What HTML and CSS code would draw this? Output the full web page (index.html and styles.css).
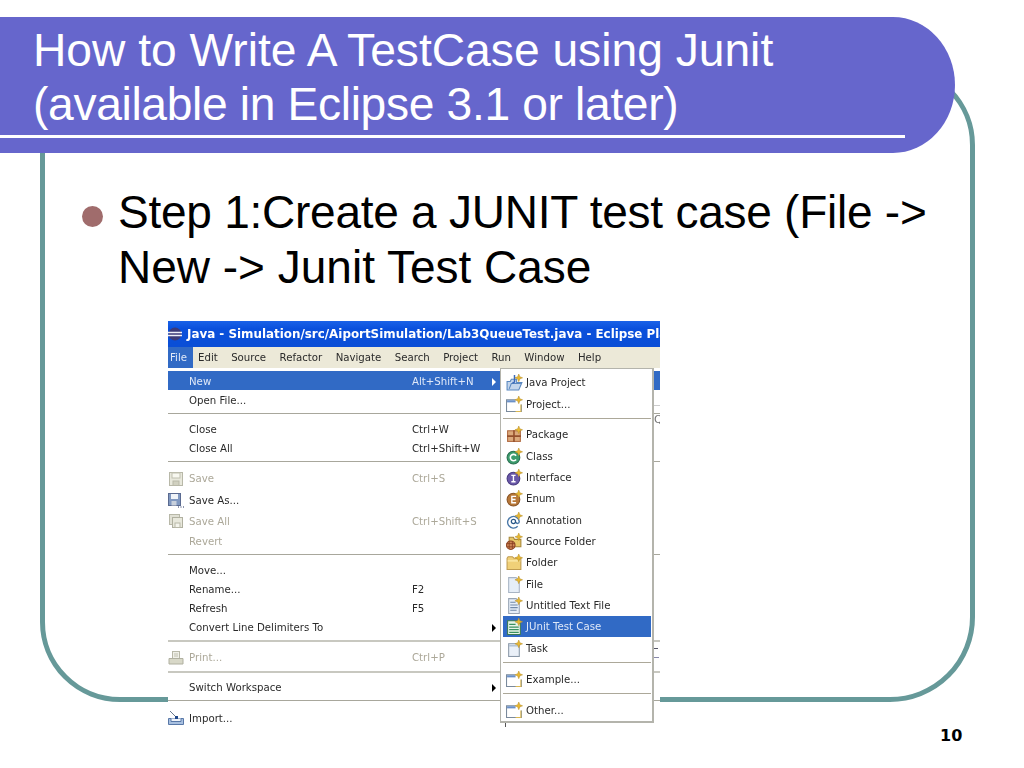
FILE: index.html
```html
<!DOCTYPE html>
<html>

<head>
    <meta charset="utf-8" />
    <title>How to Write A TestCase using Junit</title>
    <link rel="stylesheet" href="styles.css">
</head>

<body>
    <svg class="icon-defs" width="0" height="0">
        <defs>
            <symbol id="star" viewBox="0 0 16 16">
                <path d="M12 0l1 2.600 2.600 1-2.600 1-1 2.600-1-2.600-2.600-1 2.600-1z" fill="#e8b830" stroke="#b89030" stroke-width=".5" />
            </symbol>
            <symbol id="i-javaproject" viewBox="0 0 16 16">
                <path d="M1 7h3l1-2h5v3H15l-3 7H1z" fill="#c4d6ec" stroke="#5a88c0" />
                <path d="M3 14l2-5h9" fill="none" stroke="#5a88c0" />
                <path d="M8 1v6c0 1-1 1.500-2 1" fill="none" stroke="#3a68b8" stroke-width="1.400" />
                <use href="#star" />
            </symbol>
            <symbol id="i-project" viewBox="0 0 16 16">
                <path d="M9 3.500H.5v11h14V8" fill="#fff" stroke="#7a8a9c" />
                <rect x="1" y="4" width="8" height="2" fill="#6a90c8" />
                <path d="M14 8v6.500H9" fill="none" stroke="#dcb850" />
                <use href="#star" />
            </symbol>
            <symbol id="i-package" viewBox="0 0 16 16">
                <rect x="1.500" y="4.500" width="12" height="10" fill="#dcaa7c" stroke="#b06a40" />
                <path d="M7.500 4v11M1 9.500h13" stroke="#94502c" stroke-width="1.500" />
                <use href="#star" />
            </symbol>
            <symbol id="i-class" viewBox="0 0 16 16">
                <circle cx="7" cy="9" r="6" fill="#3c9c6c" stroke="#2a7050" />
                <path d="M9.500 7.200A3 3 0 1 0 9.500 10.800" fill="none" stroke="#fff" stroke-width="1.500" />
                <use href="#star" />
            </symbol>
            <symbol id="i-interface" viewBox="0 0 16 16">
                <circle cx="7" cy="9" r="6" fill="#6a58a8" stroke="#483a80" />
                <path d="M5 6h4M7 6v6M5 12h4" stroke="#fff" stroke-width="1.300" />
                <use href="#star" />
            </symbol>
            <symbol id="i-enum" viewBox="0 0 16 16">
                <circle cx="7" cy="9" r="6" fill="#b87838" stroke="#8a5424" />
                <path d="M9.500 6H5.500v6h4M5.500 9h3.500" fill="none" stroke="#fff" stroke-width="1.300" />
                <use href="#star" />
            </symbol>
            <symbol id="i-annotation" viewBox="0 0 16 16">
                <path d="M11 13.500A5.500 5.500 0 1 1 12.500 9c0 2-2.500 2.500-3 .5" fill="none" stroke="#4a78a8" stroke-width="1.300" />
                <circle cx="7" cy="9" r="2" fill="none" stroke="#2a5888" stroke-width="1.200" />
                <use href="#star" />
            </symbol>
            <symbol id="i-sourcefolder" viewBox="0 0 16 16">
                <path d="M3 4h4l1 2h6v7H3z" fill="#e8c868" stroke="#a88838" />
                <circle cx="4.500" cy="11.500" r="4" fill="#d08858" stroke="#8a4020" />
                <path d="M3 8v7M6 8v7M.5 10h8M.5 13h8" stroke="#8a4020" stroke-width=".8" />
                <use href="#star" />
            </symbol>
            <symbol id="i-folder" viewBox="0 0 16 16">
                <path d="M1 4l1-1.500h4L7.500 4H14v10.500H1z" fill="#f0d078" stroke="#c09c50" />
                <path d="M1.500 6.500H13.500" stroke="#fff0b8" />
                <use href="#star" />
            </symbol>
            <symbol id="i-file" viewBox="0 0 16 16">
                <path d="M2.500 1.500h7l3 3v11h-10z" fill="#e6eef8" stroke="#a8b4c4" />
                <use href="#star" />
            </symbol>
            <symbol id="i-textfile" viewBox="0 0 16 16">
                <path d="M2.500 1.500h7l3 3v11h-10z" fill="#e6eef8" stroke="#98a4b4" />
                <path d="M4 5h5M4 7.500h7M4 10h7M4 12.500h6" stroke="#7088a8" />
                <use href="#star" />
            </symbol>
            <symbol id="i-junit" viewBox="0 0 16 16">
                <path d="M1.500 2.500h9l3 3v10h-12z" fill="#e8f4e8" stroke="#3a7a50" />
                <path d="M3 6h6M3 8.500h9M3 11h9M3 13.500h9" stroke="#3a9060" stroke-width="1.200" />
                <use href="#star" />
            </symbol>
            <symbol id="i-task" viewBox="0 0 16 16">
                <rect x="2.500" y="3.500" width="10" height="12" fill="#eaf0f8" stroke="#8a98a8" />
                <path d="M3 5.500h9" stroke="#9ab0c8" />
                <use href="#star" />
            </symbol>
            <symbol id="i-save" viewBox="0 0 16 16">
                <rect x="1.500" y="1.500" width="13" height="13" fill="#e8e8dc" stroke="#b8b8a8" />
                <rect x="4" y="2" width="8" height="5" fill="#f8f8f0" stroke="#c0c0b0" />
                <rect x="5" y="10" width="6" height="4.500" fill="#d0d0c0" stroke="#b8b8a8" />
            </symbol>
            <symbol id="i-saveas" viewBox="0 0 16 16">
                <rect x=".5" y="1.500" width="12" height="12" fill="#8098c0" stroke="#5a6a90" />
                <rect x="3" y="2" width="7" height="5" fill="#f0f4f8" />
                <rect x="3.500" y="9" width="5" height="4.500" fill="#c8d0dc" />
                <path d="M10 15h1M12.500 15h1M15 15h1" stroke="#203060" stroke-width="1.200" />
            </symbol>
            <symbol id="i-saveall" viewBox="0 0 16 16">
                <rect x="1.500" y="1.500" width="10" height="10" fill="#e0e0d4" stroke="#b8b8a8" />
                <rect x="4.500" y="4.500" width="10" height="10" fill="#e8e8dc" stroke="#b0b0a0" />
                <rect x="7" y="10" width="5" height="4.500" fill="#f4f4ec" stroke="#b8b8a8" />
            </symbol>
            <symbol id="i-print" viewBox="0 0 16 16">
                <rect x="4.500" y="1.500" width="7" height="7" fill="#f0f0e8" stroke="#b8b8a8" />
                <path d="M1 8.500h14v5.500H1z" fill="#d8d8c8" stroke="#b0b0a0" />
                <path d="M6 4h4M6 6h4" stroke="#c0c0b0" />
            </symbol>
            <symbol id="i-import" viewBox="0 0 16 16">
                <path d="M.500 8.500h15v6H.500z" fill="#a8c0e0" stroke="#5878a8" />
                <path d="M3 8.500v3h10v-3" fill="#f0f4fa" stroke="#5878a8" />
                <path d="M2 1l6 6" stroke="#6a7a90" />
                <rect x="7" y="6" width="3" height="3" fill="#20488a" />
            </symbol>
        </defs>
    </svg>

    <div class="slide">
        <div class="frame"></div>

        <header class="title-bar">
            <h1 class="title">How to Write A TestCase using Junit<br><span class="title-sub">(available in Eclipse 3.1 or later)</span></h1>
        </header>

        <div class="content">
            <span class="bullet"></span>
            <p class="point"><span class="point-first">Step 1:Create a JUNIT test case (File -&gt;</span><br>New -&gt; Junit Test Case</p>
        </div>

        <div class="shot">
            <div class="win-title">
                <svg class="logo" viewBox="0 0 15 14">
                    <circle cx="7" cy="7" r="6.500" fill="#3c3a78" />
                    <path d="M0 5.500h14M0 8.500h14" stroke="#f0f0f8" stroke-width="1.600" />
                </svg>
                <span>Java - Simulation/src/AiportSimulation/Lab3QueueTest.java - Eclipse Platform</span>
            </div>
            <div class="menubar">
                <span class="top active">File</span>
                <span class="top">Edit</span>
                <span class="top">Source</span>
                <span class="top">Refactor</span>
                <span class="top">Navigate</span>
                <span class="top">Search</span>
                <span class="top">Project</span>
                <span class="top">Run</span>
                <span class="top">Window</span>
                <span class="top">Help</span>
            </div>

            <div class="file-menu">
                <div class="row hl"><i></i><span>New</span><span>Alt+Shift+N</span><b class="arrow"></b></div>
                <div class="row"><i></i><span>Open File...</span></div>
                <div class="sep"></div>
                <div class="row"><i></i><span>Close</span><span>Ctrl+W</span></div>
                <div class="row"><i></i><span>Close All</span><span>Ctrl+Shift+W</span></div>
                <div class="sep"></div>
                <div class="row tall off"><i><svg><use href="#i-save" /></svg></i><span>Save</span><span>Ctrl+S</span></div>
                <div class="row tall"><i><svg><use href="#i-saveas" /></svg></i><span>Save As...</span></div>
                <div class="row tall off"><i><svg><use href="#i-saveall" /></svg></i><span>Save All</span><span>Ctrl+Shift+S</span></div>
                <div class="row off"><i></i><span>Revert</span></div>
                <div class="sep"></div>
                <div class="row"><i></i><span>Move...</span></div>
                <div class="row"><i></i><span>Rename...</span><span>F2</span></div>
                <div class="row"><i></i><span>Refresh</span><span>F5</span></div>
                <div class="row"><i></i><span>Convert Line Delimiters To</span><span></span><b class="arrow"></b></div>
                <div class="sep thick"></div>
                <div class="row tall off"><i><svg><use href="#i-print" /></svg></i><span>Print...</span><span>Ctrl+P</span></div>
                <div class="sep thick"></div>
                <div class="row"><i></i><span>Switch Workspace</span><span></span><b class="arrow"></b></div>
                <div class="sep"></div>
                <div class="row tall"><i><svg><use href="#i-import" /></svg></i><span>Import...</span></div>
            </div>

            <div class="sub-menu">
                <div class="sub-row wide"><svg><use href="#i-javaproject" /></svg>Java Project</div>
                <div class="sub-row wide"><svg><use href="#i-project" /></svg>Project...</div>
                <div class="sub-sep"></div>
                <div class="sub-row"><svg><use href="#i-package" /></svg>Package</div>
                <div class="sub-row"><svg><use href="#i-class" /></svg>Class</div>
                <div class="sub-row"><svg><use href="#i-interface" /></svg>Interface</div>
                <div class="sub-row"><svg><use href="#i-enum" /></svg>Enum</div>
                <div class="sub-row"><svg><use href="#i-annotation" /></svg>Annotation</div>
                <div class="sub-row"><svg><use href="#i-sourcefolder" /></svg>Source Folder</div>
                <div class="sub-row"><svg><use href="#i-folder" /></svg>Folder</div>
                <div class="sub-row"><svg><use href="#i-file" /></svg>File</div>
                <div class="sub-row"><svg><use href="#i-textfile" /></svg>Untitled Text File</div>
                <div class="sub-row hl"><svg><use href="#i-junit" /></svg>JUnit Test Case</div>
                <div class="sub-row wide"><svg><use href="#i-task" /></svg>Task</div>
                <div class="sub-sep"></div>
                <div class="sub-row wide"><svg><use href="#i-project" /></svg>Example...</div>
                <div class="sub-sep"></div>
                <div class="sub-row wide"><svg><use href="#i-project" /></svg>Other...</div>
            </div>

            <!-- bits of the editor that show past the menus -->
            <div class="peek peek-top"></div>
            <div class="peek peek-q">Q</div>
            <div class="peek peek-mark"></div>
            <div class="peek peek-mark2"></div>
            <div class="peek peek-tick"></div>
        </div>

        <div class="page-num">10</div>
    </div>
</body>

</html>
```

FILE: styles.css
```css
body {
    margin: 0;
    background: #fff;
    font-family: "Liberation Sans", Arial, sans-serif;
}

.icon-defs {
    position: absolute;
}

.slide {
    position: relative;
    width: 1024px;
    height: 768px;
    overflow: hidden;
    padding-top: 17px;
    box-sizing: border-box;
}

/* teal outline, sits behind the title and the screenshot */
.frame {
    position: absolute;
    left: 40px;
    top: 65px;
    width: 935px;
    height: 637px;
    box-sizing: border-box;
    border: 5px solid #669999;
    border-radius: 80px 80px 85px 80px;
}

.title-bar {
    position: relative;
    width: 955px;
    height: 136px;
    background: #6666cc;
    border-radius: 0 62px 62px 0 / 0 68px 68px 0;
}

.title {
    width: 872px;
    height: 112px;
    margin: 0;
    padding: 6px 0 0 33px;
    font-size: 46.2px;
    font-weight: normal;
    line-height: 54px;
    color: #fff;
    border-bottom: 3px solid #fff;
}

.title-sub {
    letter-spacing: -0.34px;
}

.content {
    position: relative;
    display: flex;
    margin: 32px 0 0 82px;
}

.bullet {
    flex: none;
    width: 21px;
    height: 21px;
    margin-top: 21px;
    border-radius: 50%;
    background: #a06c6c;
}

.point {
    margin: 0 0 0 15px;
    font-size: 46px;
    line-height: 55px;
    color: #000;
}

.point-first {
    letter-spacing: -0.25px;
}

/* eclipse screenshot, a little soft like the pasted picture */
.shot {
    position: relative;
    width: 492px;
    height: 407px;
    margin: 26px 0 0 168px;
    background: #fff;
    overflow: hidden;
    font-family: "DejaVu Sans", sans-serif;
    font-size: 10.2px;
    color: #2a2a2a;
    filter: blur(0.3px);
}

.win-title {
    display: flex;
    align-items: center;
    height: 26px;
    background: linear-gradient(#1a62e8, #0a50dc 30%, #0a4ed6);
    color: #fff;
    font-weight: bold;
    font-size: 11.9px;
    white-space: nowrap;
}

.logo {
    flex: none;
    width: 15px;
    height: 14px;
    margin-right: 4px;
}

.menubar {
    display: flex;
    height: 21px;
    background: #ece9d8;
    line-height: 21px;
}

.top {
    margin-left: 13.4px;
}

.top.active {
    margin: 0 -8.4px 0 0;
    width: 23px;
    padding-left: 2px;
    background: #316ac5;
    color: #dfe8f8;
}

.file-menu {
    padding-top: 3px;
}

.row {
    display: grid;
    grid-template-columns: 21px 223px 80px 8px;
    align-items: center;
    height: 19px;
    box-sizing: border-box;
    padding-top: 2px;
    white-space: nowrap;
}

.row.tall {
    height: 21.35px;
}

.row i {
    display: block;
    height: 16px;
}

.row svg {
    display: block;
    width: 16px;
    height: 16px;
}

.row.hl {
    background: #316ac5;
    color: #dfe8f8;
}

.row.off {
    color: #aca899;
}

.sep {
    height: 10px;
    box-sizing: border-box;
    padding-top: 4px;
}

.sep::after {
    content: "";
    display: block;
    height: 1px;
    background: #a8a79c;
}

.sep.thick::after {
    height: 2px;
    background: #c8c8c0;
}

.arrow {
    width: 0;
    height: 0;
    border-left: 4px solid #000;
    border-top: 4px solid transparent;
    border-bottom: 4px solid transparent;
}

.row.hl .arrow {
    border-left-color: #fff;
}

.sub-menu {
    position: absolute;
    left: 332px;
    top: 47px;
    z-index: 2;
    width: 154px;
    height: 355px;
    box-sizing: border-box;
    padding: 2px 1px 0 2px;
    background: #fff;
    border: 1px solid #b4b4ac;
    border-right-width: 2px;
    border-bottom-width: 2px;
}

.sub-row {
    display: flex;
    align-items: center;
    height: 21.35px;
    padding-left: 3px;
    white-space: nowrap;
}

.sub-row.wide {
    height: 22px;
}

.sub-row svg {
    flex: none;
    width: 17px;
    height: 17px;
    margin-right: 3px;
}

.sub-row.hl {
    background: #316ac5;
    color: #dfe8f8;
}

.sub-sep {
    height: 9px;
    box-sizing: border-box;
    padding-top: 3px;
}

.sub-sep::after {
    content: "";
    display: block;
    height: 1px;
    background: #aca899;
}

.peek {
    position: absolute;
}

.peek-top {
    left: 486px;
    top: 84px;
    width: 6px;
    height: 1px;
    background: #ccc;
}

.peek-q {
    left: 486px;
    top: 92px;
    width: 6px;
    overflow: hidden;
    color: #777;
    font-size: 11px;
}

.peek-mark {
    left: 486px;
    top: 327px;
    width: 4px;
    height: 1px;
    background: #556;
}

.peek-mark2 {
    left: 486px;
    top: 336px;
    width: 5px;
    height: 1px;
    background: #88a;
}

.peek-tick {
    left: 337px;
    top: 402px;
    width: 1px;
    height: 4px;
    background: #555;
}

.page-num {
    position: absolute;
    left: 940px;
    top: 726px;
    font-family: "DejaVu Sans", sans-serif;
    font-size: 16px;
    font-weight: bold;
    color: #000;
}
```
